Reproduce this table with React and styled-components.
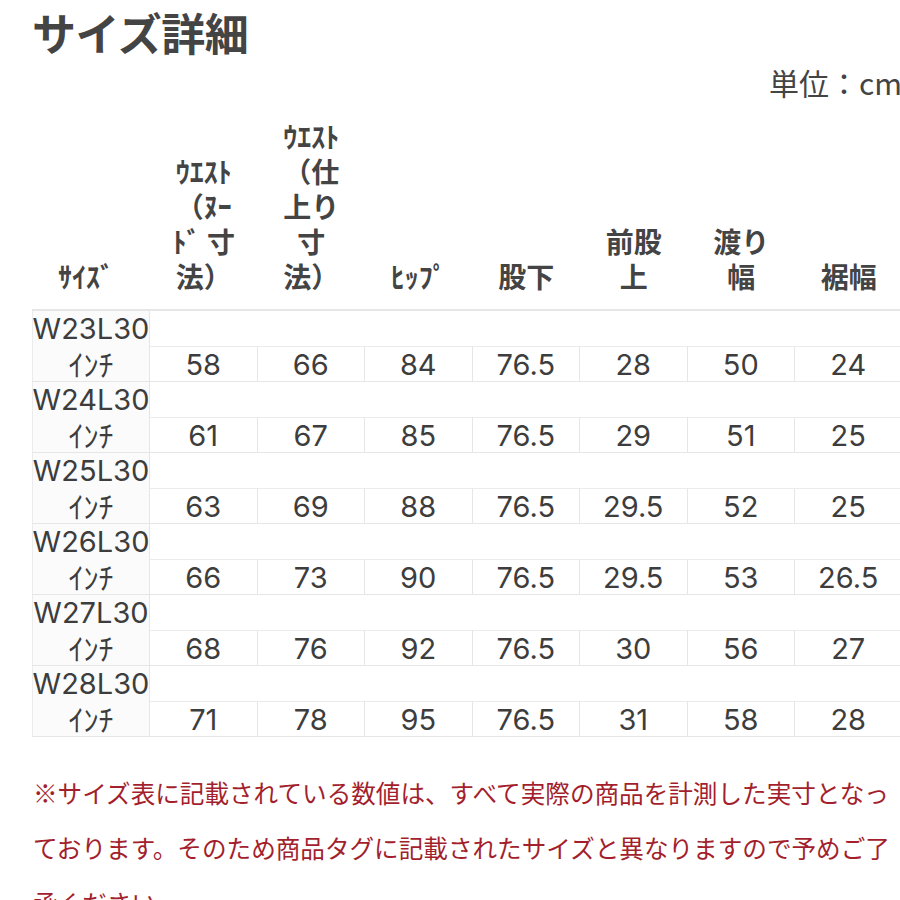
import React from "react";
import styled, { createGlobalStyle } from "styled-components";

const GlobalStyle = createGlobalStyle`
  html, body {
    margin: 0;
    padding: 0;
    background: #ffffff;
    overflow: hidden;
  }
  body {
    font-family: "Noto Sans CJK JP", "Noto Sans", sans-serif;
    color: #444444;
  }
`;

const Page = styled.div`
  width: 870px;
  padding-left: 32px;
`;

const Title = styled.h2`
  margin: 0;
  font-size: 44px;
  line-height: 64px;
  font-weight: 700;
  color: #444444;
  letter-spacing: -0.5px;
`;

const Unit = styled.div`
  text-align: right;
  font-size: 30px;
  line-height: 36px;
  color: #444444;
  white-space: nowrap;
`;

const COLS = "118px repeat(7, 107.5px)";

const HeadRow = styled.div`
  display: grid;
  grid-template-columns: ${COLS};
  height: 211px;
  border-bottom: 2px solid #e6e6e6;
  box-sizing: border-box;
`;

const HeadCell = styled.div`
  align-self: end;
  padding-bottom: 15px;
  padding-right: ${(p) => (p.$first ? "10px" : "0")};
  text-align: center;
  font-size: 28px;
  line-height: 35px;
  font-weight: 700;
  color: #444444;
  white-space: nowrap;
`;

const Group = styled.div`
  display: grid;
  grid-template-columns: ${COLS};
  grid-template-rows: 35px 36px;
`;

const SizeCell = styled.div`
  grid-row: 1 / span 2;
  grid-column: 1;
  display: flex;
  flex-direction: column;
  align-items: center;
  background: #fbfbfb;
  border-left: 1px solid #ececec;
  border-right: 1px solid #e6e6e6;
  border-bottom: 1px solid #e6e6e6;
  box-sizing: border-box;
`;

const SizeName = styled.div`
  height: 35px;
  font-family: "Inter", "Liberation Sans", sans-serif;
  font-size: 29px;
  line-height: 35px;
  color: #3d3d3d;
  white-space: nowrap;
`;

const SizeUnit = styled.div`
  font-size: 30px;
  line-height: 35px;
  color: #3d3d3d;
`;

const DataCell = styled.div`
  grid-row: 2;
  display: flex;
  align-items: center;
  justify-content: center;
  border-top: 1px solid #ececec;
  border-bottom: 1px solid #e6e6e6;
  border-right: 1px solid #e6e6e6;
  box-sizing: border-box;
  font-family: "Inter", "Liberation Sans", sans-serif;
  font-size: 29px;
  color: #3d3d3d;
`;

const Note = styled.p`
  margin: 28px 0 0 1px;
  font-size: 24.6px;
  line-height: 55px;
  color: #a31f2d;
  white-space: nowrap;
`;

const headers = [
  ["ｻｲｽﾞ"],
  ["ｳｴｽﾄ", "（ﾇｰ", "ﾄﾞ 寸", "法）"],
  ["ｳｴｽﾄ", "（仕", "上り", "寸", "法）"],
  ["ﾋｯﾌﾟ"],
  ["股下"],
  ["前股", "上"],
  ["渡り", "幅"],
  ["裾幅"],
];

const rows = [
  ["W23L30", "58", "66", "84", "76.5", "28", "50", "24"],
  ["W24L30", "61", "67", "85", "76.5", "29", "51", "25"],
  ["W25L30", "63", "69", "88", "76.5", "29.5", "52", "25"],
  ["W26L30", "66", "73", "90", "76.5", "29.5", "53", "26.5"],
  ["W27L30", "68", "76", "92", "76.5", "30", "56", "27"],
  ["W28L30", "71", "78", "95", "76.5", "31", "58", "28"],
];

export default function App() {
  return (
    <Page>
      <GlobalStyle />
      <Title>サイズ詳細</Title>
      <Unit>単位：cm</Unit>
      <HeadRow>
        {headers.map((lines, i) => (
          <HeadCell key={i} $first={i === 0}>
            {lines.map((l, j) => (
              <div key={j}>{l}</div>
            ))}
          </HeadCell>
        ))}
      </HeadRow>
      {rows.map(([size, ...vals]) => (
        <Group key={size}>
          <SizeCell>
            <SizeName>{size}</SizeName>
            <SizeUnit>ｲﾝﾁ</SizeUnit>
          </SizeCell>
          {vals.map((v, i) => (
            <DataCell key={i}>{v}</DataCell>
          ))}
        </Group>
      ))}
      <Note>
        ※サイズ表に記載されている数値は、すべて実際の商品を計測した実寸となっ
        <br />
        ております。そのため商品タグに記載されたサイズと異なりますので予めご了
        <br />
        承ください。
      </Note>
    </Page>
  );
}
